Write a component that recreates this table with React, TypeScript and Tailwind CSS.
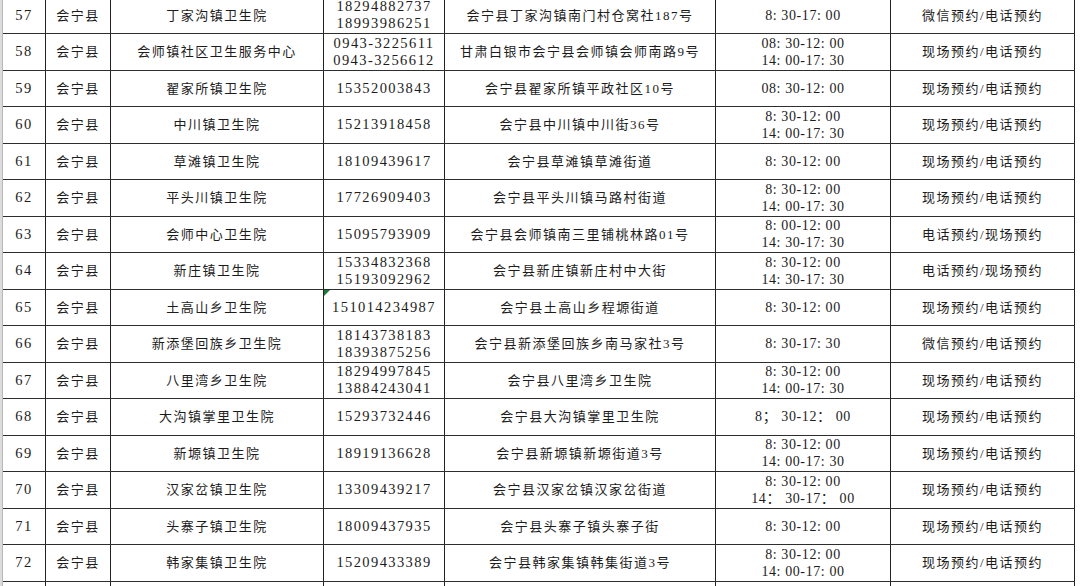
type Row = {
  no: number
  name: string
  phone: string[]
  addr: string
  hours: string[]
  way: string
  mark?: boolean
}

const rows: Row[] = [
  { no: 57, name: '丁家沟镇卫生院', phone: ['18294882737', '18993986251'], addr: '会宁县丁家沟镇南门村仓窝社187号', hours: ['8: 30-17: 00'], way: '微信预约/电话预约' },
  { no: 58, name: '会师镇社区卫生服务中心', phone: ['0943-3225611', '0943-3256612'], addr: '甘肃白银市会宁县会师镇会师南路9号', hours: ['08: 30-12: 00', '14: 00-17: 30'], way: '现场预约/电话预约' },
  { no: 59, name: '翟家所镇卫生院', phone: ['15352003843'], addr: '会宁县翟家所镇平政社区10号', hours: ['08: 30-12: 00'], way: '现场预约/电话预约' },
  { no: 60, name: '中川镇卫生院', phone: ['15213918458'], addr: '会宁县中川镇中川街36号', hours: ['8: 30-12: 00', '14: 00-17: 30'], way: '现场预约/电话预约' },
  { no: 61, name: '草滩镇卫生院', phone: ['18109439617'], addr: '会宁县草滩镇草滩街道', hours: ['8: 30-12: 00'], way: '现场预约/电话预约' },
  { no: 62, name: '平头川镇卫生院', phone: ['17726909403'], addr: '会宁县平头川镇马路村街道', hours: ['8: 30-12: 00', '14: 00-17: 30'], way: '现场预约/电话预约' },
  { no: 63, name: '会师中心卫生院', phone: ['15095793909'], addr: '会宁县会师镇南三里铺桃林路01号', hours: ['8: 00-12: 00', '14: 30-17: 30'], way: '电话预约/现场预约' },
  { no: 64, name: '新庄镇卫生院', phone: ['15334832368', '15193092962'], addr: '会宁县新庄镇新庄村中大街', hours: ['8: 30-12: 00', '14: 30-17: 30'], way: '电话预约/现场预约' },
  { no: 65, name: '土高山乡卫生院', phone: ['151014234987'], addr: '会宁县土高山乡程塬街道', hours: ['8: 30-12: 00'], way: '现场预约/电话预约', mark: true },
  { no: 66, name: '新添堡回族乡卫生院', phone: ['18143738183', '18393875256'], addr: '会宁县新添堡回族乡南马家社3号', hours: ['8: 30-17: 30'], way: '微信预约/电话预约' },
  { no: 67, name: '八里湾乡卫生院', phone: ['18294997845', '13884243041'], addr: '会宁县八里湾乡卫生院', hours: ['8: 30-12: 00', '14: 00-17: 30'], way: '现场预约/电话预约' },
  { no: 68, name: '大沟镇掌里卫生院', phone: ['15293732446'], addr: '会宁县大沟镇掌里卫生院', hours: ['8； 30-12： 00'], way: '现场预约/电话预约' },
  { no: 69, name: '新塬镇卫生院', phone: ['18919136628'], addr: '会宁县新塬镇新塬街道3号', hours: ['8: 30-12: 00', '14: 00-17: 30'], way: '现场预约/电话预约' },
  { no: 70, name: '汉家岔镇卫生院', phone: ['13309439217'], addr: '会宁县汉家岔镇汉家岔街道', hours: ['8: 30-12: 00', '14： 30-17： 00'], way: '现场预约/电话预约' },
  { no: 71, name: '头寨子镇卫生院', phone: ['18009437935'], addr: '会宁县头寨子镇头寨子街', hours: ['8: 30-12: 00'], way: '现场预约/电话预约' },
  { no: 72, name: '韩家集镇卫生院', phone: ['15209433389'], addr: '会宁县韩家集镇韩集街道3号', hours: ['8: 30-12: 00', '14: 00-17: 00'], way: '现场预约/电话预约' },
]

const cell = 'flex flex-col items-center justify-center border-r border-[#222] text-center'
const cn = 'text-[13px] tracking-[1.5px]'
const num = 'text-[14.5px] tracking-[1.4px] leading-[17px]'

const TableRow = ({ r }: { r?: Row }) => (
  <div className="flex h-[36.5px] border-b border-[#2e2e2e]">
    <div className={`${cell} w-[43px] ${num}`}>{r?.no}</div>
    <div className={`${cell} w-[65px] ${cn}`}>{r && '会宁县'}</div>
    <div className={`${cell} w-[213px] ${cn}`}>{r?.name}</div>
    <div className={`${cell} relative w-[121px] ${num}`}>
      {r?.mark && (
        <span className="absolute left-0 top-0 h-0 w-0 border-t-[6px] border-r-[6px] border-t-[#1d7a36] border-r-transparent" />
      )}
      {r?.phone.map((p) => (
        <span key={p}>{p}</span>
      ))}
    </div>
    <div className={`${cell} w-[271px] ${cn}`}>{r?.addr}</div>
    <div className={`${cell} w-[175px] text-[14px] tracking-[0.6px] leading-[17px]`}>
      {r?.hours.map((h) => (
        <span key={h} className="whitespace-pre">{h}</span>
      ))}
    </div>
    <div className={`${cell} w-[184px] border-[#8c8c8c] ${cn}`}>{r?.way}</div>
  </div>
)

export default function App() {
  return (
    <div className="flex h-[586px] w-[1080px] overflow-hidden bg-white font-['Liberation_Serif','Noto_Sans_CJK_SC',serif] text-[#1c1c1c]">
      <div className="w-[3px] shrink-0 border-r border-[#b8b8b8] bg-[#dcdcdc]" />
      <div className="-mt-[2.5px] w-[1072px] shrink-0">
        {rows.map((r) => (
          <TableRow key={r.no} r={r} />
        ))}
        <TableRow />
      </div>
      <div className="flex-1" />
    </div>
  )
}
